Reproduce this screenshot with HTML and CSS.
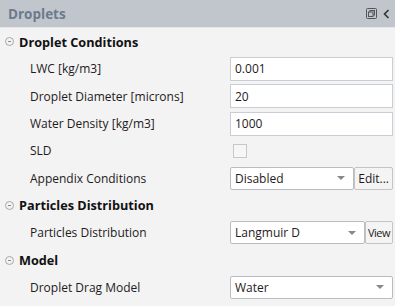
FILE: index.html
```html
<!DOCTYPE html>
<html lang="en">
<head>
  <meta charset="UTF-8">
  <title>Droplets</title>
  <link rel="stylesheet" href="styles.css">
</head>
<body>
  <div class="panel">
    <div class="panel-header">
      <span class="panel-title">Droplets</span>
      <span class="header-icons">
        <svg width="11" height="11" viewBox="0 0 11 11">
          <rect x="0.5" y="0.5" width="10" height="10" rx="1" fill="none" stroke="#555"/>
          <rect x="4" y="2.5" width="4.5" height="4.5" fill="none" stroke="#555"/>
          <rect x="2.5" y="4" width="4.5" height="4.5" fill="#c1c6cc" stroke="#555"/>
        </svg>
        <svg width="7" height="10" viewBox="0 0 7 10">
          <path d="M5.5 1 L1.5 5 L5.5 9" fill="none" stroke="#333" stroke-width="1.6"/>
        </svg>
      </span>
    </div>

    <div class="section">
      <div class="heading"><span class="toggle"></span>Droplet Conditions</div>
      <div class="row">
        <span class="label">LWC [kg/m3]</span>
        <input class="text-input" type="text" value="0.001">
      </div>
      <div class="row">
        <span class="label">Droplet Diameter [microns]</span>
        <input class="text-input" type="text" value="20">
      </div>
      <div class="row">
        <span class="label">Water Density [kg/m3]</span>
        <input class="text-input" type="text" value="1000">
      </div>
      <div class="row">
        <span class="label">SLD</span>
        <span class="checkbox"></span>
      </div>
      <div class="row">
        <span class="label">Appendix Conditions</span>
        <div class="combo">
          <div class="select"><span>Disabled</span><span class="arrow"></span></div>
          <button class="btn">Edit...</button>
        </div>
      </div>
    </div>

    <div class="section">
      <div class="heading"><span class="toggle"></span>Particles Distribution</div>
      <div class="row">
        <span class="label">Particles Distribution</span>
        <div class="combo">
          <div class="select"><span>Langmuir D</span><span class="arrow"></span></div>
          <button class="btn btn-small">View</button>
        </div>
      </div>
    </div>

    <div class="section">
      <div class="heading"><span class="toggle"></span>Model</div>
      <div class="row">
        <span class="label">Droplet Drag Model</span>
        <div class="select"><span>Water</span><span class="arrow"></span></div>
      </div>
    </div>
  </div>
</body>
</html>
```

FILE: styles.css
```css
body {
  margin: 0;
  background: #f3f3f3;
  font-family: "Open Sans", "Noto Sans", sans-serif;
  font-size: 12px;
  color: #1f1a22;
}

.panel {
  width: 395px;
}

.panel-header {
  height: 27px;
  background: #c1c6cc;
  display: flex;
  align-items: center;
  justify-content: space-between;
  padding: 0 5px 0 8px;
  border-bottom: 1px solid #e4e6e9;
}

.panel-title {
  font-weight: bold;
  font-size: 13.5px;
  color: #6b7a8c;
}

.header-icons {
  display: flex;
  align-items: center;
  gap: 6px;
}

.section {
  display: flex;
  flex-direction: column;
}

.section:first-of-type {
  margin-top: 6px;
}

.heading {
  height: 27.3px;
  display: flex;
  align-items: center;
  font-weight: bold;
  font-size: 12.7px;
  color: #111;
  padding-left: 5px;
}

.toggle {
  width: 9px;
  height: 9px;
  border: 1px solid #a8a8a8;
  border-radius: 50%;
  margin-right: 5px;
  position: relative;
  box-sizing: border-box;
}

.toggle::after {
  content: "";
  position: absolute;
  left: 2px;
  top: 3px;
  width: 3px;
  height: 1px;
  background: #8a8a8a;
}

.row {
  height: 27.3px;
  display: grid;
  grid-template-columns: 230px 163px;
  align-items: center;
}

.label {
  padding-left: 30px;
}

.text-input {
  box-sizing: border-box;
  height: 24px;
  width: 163px;
  border: 1px solid #c9ced6;
  background: #fff;
  font: inherit;
  color: #1f1a22;
  padding: 0 4px;
  margin: 0;
}

.checkbox {
  width: 14px;
  height: 14px;
  box-sizing: border-box;
  border: 1px solid #c8c8c8;
  background: #f6f6f6;
  margin-left: 3px;
}

.combo {
  display: flex;
  height: 23px;
}

.select {
  box-sizing: border-box;
  height: 23px;
  flex: 1;
  border: 1px solid #b9bcc1;
  border-radius: 2px;
  background: #fff;
  display: flex;
  align-items: center;
  justify-content: space-between;
  padding: 0 8px 0 4px;
}

.arrow {
  width: 0;
  height: 0;
  border-left: 4px solid transparent;
  border-right: 4px solid transparent;
  border-top: 4px solid #888;
}

.btn {
  box-sizing: border-box;
  height: 23px;
  border: 1px solid #c4c4c4;
  border-radius: 2px;
  background: #f4f4f4;
  font: inherit;
  color: #1f1a22;
  padding: 0 3px;
  margin: 0;
}

.btn-small {
  font-size: 11px;
  letter-spacing: -0.5px;
  padding: 0 2px;
}
```
